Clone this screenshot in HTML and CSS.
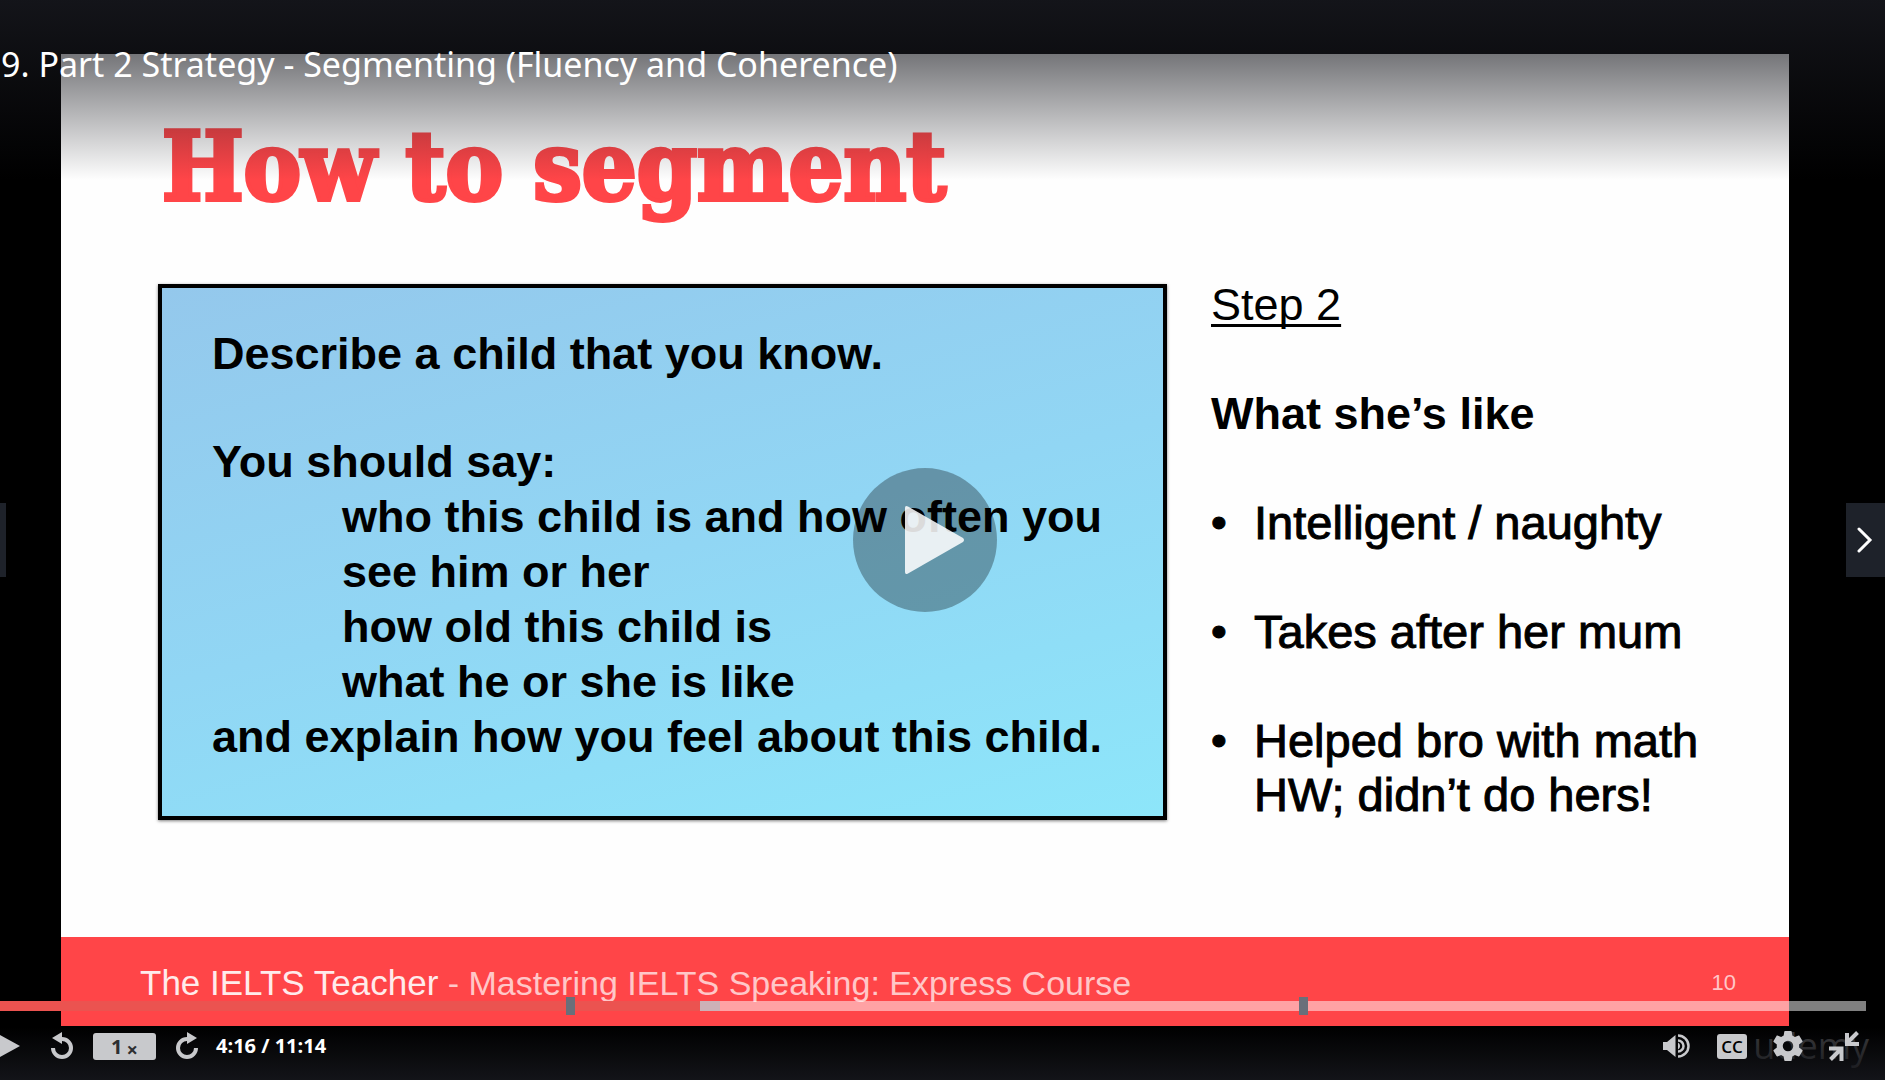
FILE: index.html
```html
<!DOCTYPE html>
<html lang="en">
<head>
<meta charset="utf-8">
<meta name="viewport" content="width=device-width, initial-scale=1">
<title>9. Part 2 Strategy - Segmenting (Fluency and Coherence)</title>
<link rel="stylesheet" href="styles.css">
</head>
<body>
<main class="player">
  <span class="watermark">udemy</span>
  <article class="slide">
    <h2 class="slide-title">How to segment</h2>
    <div class="slide-body">
      <section class="card">
        <p>Describe a child that you know.</p>
        <p class="spaced">You should say:</p>
        <p class="indent">who this child is and how often you<br>see him or her</p>
        <p class="indent">how old this child is</p>
        <p class="indent">what he or she is like</p>
        <p>and explain how you feel about this child.</p>
      </section>
      <section class="notes">
        <p><u>Step 2</u></p>
        <h3 class="notes-heading">What she’s like</h3>
        <ul class="points">
          <li>Intelligent / naughty</li>
          <li>Takes after her mum</li>
          <li>Helped bro with math HW; didn’t do hers!</li>
        </ul>
      </section>
    </div>
    <footer class="slide-footer">
      <p class="course"><span class="teacher">The IELTS Teacher</span> - Mastering IELTS Speaking: Express Course</p>
      <span class="page">10</span>
    </footer>
  </article>

  <header class="title-bar"><h1 class="title">9. Part 2 Strategy - Segmenting (Fluency and Coherence)</h1></header>

  <button class="big-play" type="button" aria-label="Play video">
    <svg width="60" height="70" viewBox="0 0 60 70"><path d="M0 3 Q0 0 3 1.500 L58 33 Q60 35 58 37 L3 68.500 Q0 70 0 67Z" fill="#fff" fill-opacity=".86"/></svg>
  </button>

  <div class="controls">
    <div class="timeline">
      <input class="seek" type="range" min="0" max="674" value="256" aria-label="Seek">
      <span class="marker" style="left:30.400%"></span>
      <span class="marker" style="left:69.650%"></span>
    </div>
    <div class="buttons">
      <button class="icon play" type="button" aria-label="Play"><svg width="20" height="24" viewBox="0 0 20 24"><path d="M0 1v22l20-11z"/></svg></button>
      <button class="icon" type="button" aria-label="Rewind 5 seconds"><svg width="26" height="28" viewBox="0 0 26 28"><path d="M13 0v5a11 11 0 1 1-11 11h4a7 7 0 1 0 7-7v3L3 6z"/></svg></button>
      <button class="rate" type="button" aria-label="Playback rate">1<small>×</small></button>
      <button class="icon" type="button" aria-label="Forward 5 seconds"><svg width="26" height="28" viewBox="0 0 26 28"><path d="M13 0v5a11 11 0 1 0 11 11h-4a7 7 0 1 1-7-7v3L23 6z"/></svg></button>
      <span class="time">4:16 / 11:14</span>
      <div class="right">
        <button class="icon" type="button" aria-label="Volume"><svg width="28" height="26" viewBox="0 0 28 26"><path d="M0 9h4l8.500-7v22L4 17H0z"/><path d="M15 9.500a4 4 0 0 1 0 7z"/><path d="M15 2.500a10.500 10.500 0 0 1 0 21M15 7.500a5.500 5.500 0 0 1 0 11" fill="none" stroke="#c8c9cc" stroke-width="2.500"/></svg></button>
        <button class="cc" type="button" aria-label="Captions">CC</button>
        <button class="icon" type="button" aria-label="Settings"><svg width="30" height="30" viewBox="2 2 20 20"><path d="M19.430 12.980c.040-.320.070-.640.070-.980s-.030-.660-.070-.980l2.110-1.650c.190-.150.240-.420.120-.640l-2-3.460c-.120-.220-.390-.300-.610-.220l-2.490 1c-.520-.400-1.080-.730-1.690-.980l-.380-2.650C14.460 2.180 14.250 2 14 2h-4c-.250 0-.460.180-.490.420l-.380 2.650c-.610.250-1.170.590-1.690.980l-2.490-1c-.230-.090-.490 0-.610.220l-2 3.460c-.130.220-.070.490.120.640l2.110 1.650c-.040.320-.070.650-.070.980s.030.660.070.980l-2.110 1.650c-.190.150-.240.420-.120.640l2 3.460c.120.220.390.300.610.220l2.490-1c.520.400 1.080.730 1.690.980l.380 2.650c.030.240.240.420.490.420h4c.250 0 .460-.180.490-.420l.380-2.650c.610-.250 1.170-.590 1.690-.980l2.490 1c.230.090.490 0 .610-.220l2-3.460c.120-.220.070-.490-.120-.640zM12 15.500a3.500 3.500 0 1 1 0-7 3.500 3.500 0 0 1 0 7z"/></svg></button>
        <button class="icon" type="button" aria-label="Exit fullscreen"><svg width="30" height="30" viewBox="0 0 30 30" fill="none" stroke="#c8c9cc" stroke-width="4"><path d="M28.500 1.500 19 11M18 2v11h12M1.500 28.500 11 19M0 17.500h12.500V30"/></svg></button>
      </div>
    </div>
  </div>
</main>
<button class="tab tab-prev" type="button" aria-label="Previous lecture"></button>
<button class="tab tab-next" type="button" aria-label="Next lecture"><svg width="16" height="26" viewBox="0 0 16 26"><path d="M2 2l11 11L2 24" fill="none" stroke="#fff" stroke-width="3" stroke-linecap="round"/></svg></button>
</body>
</html>
```
FILE: styles.css
```css
* { box-sizing: border-box; margin: 0; padding: 0; }

body {
  min-height: 100vh;
  background: #000;
  color: #000;
  font-family: "Liberation Sans", Arial, sans-serif;
  overflow: hidden;
  position: relative;
}

button { border: 0; background: none; font: inherit; cursor: pointer; }
svg { display: block; }

/* The stage runs past the left edge of the window. */
.player {
  position: relative;
  margin-left: -35px;
  min-height: 100vh;
  display: flex;
  flex-direction: column;
  justify-content: center;
  align-items: center;
}

/* Slide */
.slide {
  width: 90%;
  aspect-ratio: 16 / 9;
  background: #fefefe;
  display: flex;
  flex-direction: column;
}

.slide-title {
  padding: 57px 0 0 101px;
  height: 224px;
  font: bold 96px/112px "DejaVu Serif Condensed", "DejaVu Serif", serif;
  color: #ff4548;
  -webkit-text-stroke: 4px #ff4548;
}

.slide-body {
  flex: 1;
  display: grid;
  grid-template-columns: 1009fr 509fr;
  align-items: start;
  gap: 44px;
  padding: 0 69px 0 97px;
  font-size: 45px;
  line-height: 55px;
}

.card {
  margin-top: 6px;
  padding: 38px 40px 52px 50px;
  border: 4px solid #000;
  background: linear-gradient(165deg, #94c8ec, #91d6f4 50%, #8de6fa);
  box-shadow: 0 1px 3px rgba(0, 0, 0, .5);
  font-weight: bold;
  white-space: nowrap;
}
.spaced { margin-top: 53px; }
.indent { padding-left: 130px; }

.notes { display: grid; gap: 55px; line-height: 54px; }
.notes u { text-decoration-thickness: 3px; text-underline-offset: 4px; text-decoration-skip-ink: none; }
.notes-heading { font-size: 45px; }
.points { display: grid; gap: 55px; list-style: none; font-size: 47px; -webkit-text-stroke: 1px #000; }
.points li { display: grid; grid-template-columns: 43px 1fr; }
.points li::before { content: "•"; font-size: 45px; }

.slide-footer {
  height: 89px;
  padding: 2px 53px 0 79px;
  background: #ff4548;
  color: #ffc7c8;
  display: flex;
  align-items: center;
  justify-content: space-between;
}
.course { font-size: 34px; }
.teacher { color: #ffebeb; font-size: 35px; }
.page { font-size: 22px; }

.watermark {
  position: absolute;
  right: 16px;
  bottom: 10px;
  color: #3a3a3c;
  font: 36px/48px "Open Sans", sans-serif;
}

/* Player chrome, laid over the video */
.title-bar {
  position: absolute;
  inset: 0 0 auto;
  height: 180px;
  padding: 40px 36px 0;
  background: linear-gradient(rgba(23, 24, 30, .85), rgba(23, 24, 30, 0));
}
.title { color: #fff; font: 400 34px/48px "Noto Sans", sans-serif; }

.big-play {
  position: absolute;
  top: calc(50% - 72px);
  left: calc(50% - 72px);
  width: 144px;
  height: 144px;
  padding-left: 52px;
  border-radius: 50%;
  background: rgba(0, 0, 0, .31);
}

.controls { position: absolute; inset: auto 0 0; }

.timeline { position: relative; height: 18px; margin: 0 19px 0 35px; display: flex; align-items: center; }
.seek {
  appearance: none;
  width: 100%;
  height: 10px;
  background: linear-gradient(90deg, #eb5350 37.500%, #ccb1b7 37.500% 38.600%, rgba(255, 255, 255, .5) 38.600%);
}
.seek::-webkit-slider-thumb { appearance: none; width: 1px; height: 10px; }
.marker { position: absolute; top: 0; width: 9px; height: 18px; margin-left: -1px; background: #6a6f7a; }

.buttons {
  height: 65px;
  padding: 0 26px 3px 35px;
  display: flex;
  align-items: center;
  background: linear-gradient(transparent 12px, rgba(20, 21, 26, .95));
}
.icon { fill: #c8c9cc; }
.play { margin-right: 29px; }
.rate {
  width: 63px;
  height: 27px;
  margin: 0 18px;
  border-radius: 3px;
  background: #c8c9cc;
  color: #2d2f31;
  font: bold 20px/27px "Open Sans", sans-serif;
}
.rate small { margin-left: 4px; font-size: 20px; vertical-align: -3px; line-height: 20px; }
.time { margin-left: 16px; color: #fff; font: bold 20px/28px "Open Sans", sans-serif; }
.right { margin-left: auto; display: flex; align-items: center; gap: 26px; }
.cc {
  width: 30px;
  height: 25px;
  border-radius: 3px;
  background: #c8c9cc;
  color: #000;
  font: 600 17px/25px "Open Sans", sans-serif;
}

.tab {
  position: absolute;
  top: calc(50% - 37px);
  height: 74px;
  background: #1e222a;
}
.tab-prev { left: 0; width: 6px; }
.tab-next { right: 0; width: 39px; padding-left: 11px; }
```
